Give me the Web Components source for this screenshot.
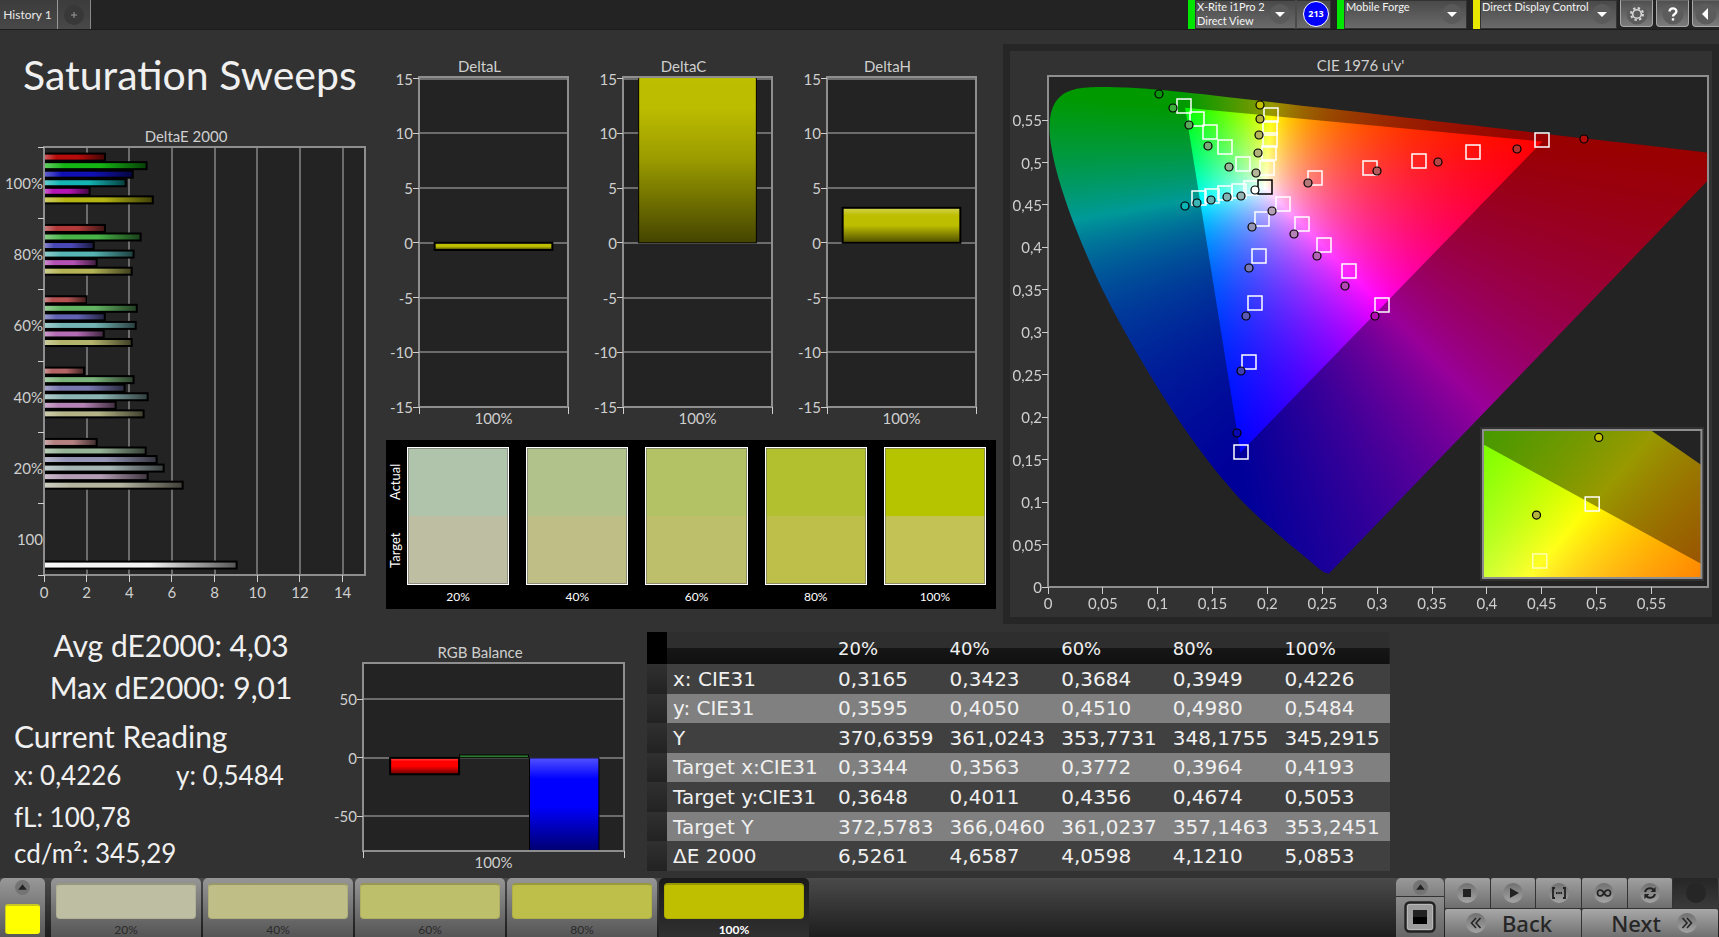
<!DOCTYPE html>
<html lang="en">
<head>
<meta charset="utf-8">
<title>Saturation Sweeps</title>
<style>
html, body { margin: 0; background: #323232; }
body { min-height: 100vh; font-family: Lato, "Open Sans", sans-serif; color: #f0f0f0; }
</style>
</head>
<body>
<calibration-app></calibration-app>
<script>
const define = (name, html, setup) => {
  customElements.define(name, class extends HTMLElement {
    connectedCallback() {
      if (this.shadowRoot) return;
      const root = this.attachShadow({ mode: "open" });
      root.innerHTML = typeof html === "function" ? html(this) : html;
      if (setup) setup(this, root);
    }
  });
};

/* ---------- plots ---------- */
const plotCss = `
  :host { display: block; }
  h2 { margin: 0; font-size: 15px; font-weight: 400; line-height: 20px; text-align: center; color: #cfcfcf; padding-bottom: 1px; }
  .plot { position: relative; height: var(--plot-height); margin-left: var(--gutter); }
  svg.chart { display: block; width: 100%; height: 100%; overflow: visible; }
  .area { overflow: hidden; }
  text { font-size: 15px; fill: #cfcfcf; }
  .bg { fill: #232323; }
  .frame { fill: none; stroke: #8e8e8e; stroke-width: 2; }
  .grid { stroke: #6c6c6c; stroke-width: 2; shape-rendering: crispEdges; }
  .tick { stroke: #cfcfcf; stroke-width: 1; shape-rendering: crispEdges; }
`;
const pct = v => (v * 100).toFixed(3) + "%";
const leftTick = y => `<svg y="${y}" overflow="visible"><line class="tick" x1="-6" x2="0" y1="0" y2="0"/></svg>`;
const bottomTick = x => `<svg x="${x}" y="100%" overflow="visible"><line class="tick" x1="0" x2="0" y1="0" y2="7"/></svg>`;
const leftText = (y, t, gap) => `<text x="${-gap}" y="${y}" dy="6" text-anchor="end">${t}</text>`;
const bottomText = (x, t, dy) => `<text x="${x}" y="100%" dy="${dy}" text-anchor="middle">${t}</text>`;
const shades = `
  <linearGradient id="shadeX"><stop offset="0" stop-color="#fff" stop-opacity=".35"/><stop offset=".2" stop-color="#fff" stop-opacity="0"/><stop offset=".55" stop-color="#000" stop-opacity="0"/><stop offset="1" stop-color="#000" stop-opacity=".65"/></linearGradient>
  <linearGradient id="shadeY" x2="0" y2="1"><stop offset="0" stop-color="#fff" stop-opacity=".32"/><stop offset=".22" stop-color="#fff" stop-opacity="0"/><stop offset=".5" stop-color="#000" stop-opacity="0"/><stop offset="1" stop-color="#000" stop-opacity=".6"/></linearGradient>
  <linearGradient id="deepY" x2="0" y2="1"><stop offset="0" stop-color="#000" stop-opacity="0"/><stop offset=".2" stop-color="#000" stop-opacity=".01"/><stop offset=".5" stop-color="#000" stop-opacity=".18"/><stop offset="1" stop-color="#000" stop-opacity=".64"/></linearGradient>`;
const bar = (x, y, w, h, fill, shade, line = 1) =>
  `<rect x="${x}" y="${y}" width="${w}" height="${h}" fill="${fill}"/>
   <rect x="${x}" y="${y}" width="${w}" height="${h}" fill="url(#${shade})" stroke="#000" stroke-width="${line}"/>`;

const sweeps = [
  ["100%", [2.86, 4.81, 4.16, 3.83, 2.14, 5.1], ["#b80c0c", "#14b414", "#1010b4", "#14b4b4", "#b414b4", "#b4b414"]],
  ["80%", [2.86, 4.53, 2.33, 4.2, 2.47, 4.11], ["#b43a3a", "#48b448", "#4848b4", "#56b4b4", "#b452b4", "#b4b456"]],
  ["60%", [2, 4.35, 2.85, 4.3, 2.8, 4.11], ["#b45050", "#62b462", "#6262b4", "#74b4b4", "#b46cb4", "#b4b46c"]],
  ["40%", [1.88, 4.2, 3.78, 4.86, 3.36, 4.67], ["#b46464", "#7ab47a", "#7878b0", "#8cb4b4", "#b482b4", "#b4b486"]],
  ["20%", [2.47, 4.77, 5.28, 5.61, 4.86, 6.5], ["#b48080", "#96b496", "#9494b4", "#a4b4b4", "#b49cb4", "#b4b4a0"]],
  ["100", [null, null, null, null, null, null, 9.03], ["", "", "", "", "", "", "#f4f4f4"]]
];
define("sweep-chart", () => {
  const max = 15.05, rows = sweeps.length;
  let s = "", bars = "", out = "";
  for (let v = 0; v <= 14; v += 2) {
    if (v) s += `<line class="grid" x1="${pct(v / max)}" x2="${pct(v / max)}" y1="0" y2="100%"/>`;
    out += bottomTick(pct(v / max)) + bottomText(pct(v / max), v, 23);
  }
  sweeps.forEach(([name, vals, colors], r) => {
    out += leftTick(pct(r / rows)) + leftText(pct((r + .5) / rows), name, 1);
    vals.forEach((v, i) => {
      if (v) bars += bar(0, pct((r + (6.6 + i * 8.55) / 71.33) / rows), pct(v / max), 7, colors[i], "shadeX", 2);
    });
  });
  out += leftTick("100%");
  return `<style>${plotCss} :host { --plot-height: 428px; --gutter: 37px; }</style>
  <h2>DeltaE 2000</h2><div class="plot"><svg class="chart" role="img" aria-label="DeltaE 2000 per saturation"><defs>${shades}</defs>
  <rect class="bg" width="100%" height="100%"/>${s}<svg class="area" width="100%" height="100%">${bars}</svg>
  <rect class="frame" width="100%" height="100%"/>${out}</svg></div>`;
});

define("delta-chart", host => {
  const v = +host.getAttribute("value"), top = 15.15, range = 30.15;
  const pos = n => pct((top - n) / range);
  let g = "", out = "";
  for (let n = 15; n >= -15; n -= 5) {
    g += `<line class="grid" x1="0" x2="100%" y1="${pos(n)}" y2="${pos(n)}"/>`;
    out += leftTick(pos(n)) + leftText(pos(n), n, 6);
  }
  const clipped = v > 15;
  const y = v > 0 ? (clipped ? "-1%" : pos(v)) : pos(0);
  const h = clipped ? pct(15.15 / range + .01) : pct(Math.abs(v) / range);
  return `<style>${plotCss} :host { --plot-height: 330px; --gutter: 28px; }</style>
  <h2>${host.getAttribute("label")}</h2><div class="plot"><svg class="chart" role="img" aria-label="${host.getAttribute("label")}"><defs>${shades}</defs>
  <rect class="bg" width="100%" height="100%"/>${g}<svg class="area" width="100%" height="100%">${bar("10.5%", y, "79%", h, "#bebe00", clipped ? "deepY" : "shadeY", clipped ? 1 : 2)}</svg>
  <rect class="frame" width="100%" height="100%"/>${out}${bottomTick("0")}${bottomTick("100%")}${bottomText("50%", "100%", 17)}</svg></div>`;
});

define("rgb-chart", () => {
  const pos = n => pct((81 - n) / 160.5);
  let g = "", out = "";
  for (const n of [50, 0, -50]) {
    g += `<line class="grid" x1="0" x2="100%" y1="${pos(n)}" y2="${pos(n)}"/>`;
    out += leftTick(pos(n)) + leftText(pos(n), n, 6);
  }
  return `<style>${plotCss} :host { --plot-height: 188px; --gutter: 27px; }</style>
  <h2>RGB Balance</h2><div class="plot"><svg class="chart" role="img" aria-label="RGB Balance"><defs>${shades}</defs>
  <rect class="bg" width="100%" height="100%"/>${g}<svg class="area" width="100%" height="100%">
  ${bar("10.4%", pos(0), "26.4%", pct(14 / 160.5), "#f00", "shadeY", 2)}
  ${bar("37%", pos(2.5), "26.4%", pct(2.5 / 160.5), "#2d7d2d", "shadeY")}
  ${bar("63.8%", pos(0), "26.6%", pct(82 / 160.5), "#00f", "shadeY")}</svg>
  <rect class="frame" width="100%" height="100%"/>${out}${bottomTick("0")}${bottomTick("100%")}${bottomText("50%", "100%", 17)}</svg></div>`;
});

/* ---------- chromaticity ---------- */
const locus = [[.1741,.005],[.1733,.0048],[.1714,.0051],[.1689,.0069],[.1644,.0109],[.1566,.0177],[.144,.0297],[.1355,.0399],[.1241,.0578],[.1096,.0868],[.0913,.1327],[.0687,.2007],[.0454,.295],[.0235,.4127],[.0082,.5384],[.0039,.6548],[.0139,.7502],[.0389,.812],[.0743,.8338],[.1142,.8262],[.1547,.8059],[.2296,.7543],[.3016,.6923],[.3731,.6245],[.4441,.5547],[.5125,.4866],[.5752,.4242],[.627,.3725],[.6915,.3083],[.7347,.2653]];
const gamut = [[.64, .33], [.3, .6], [.15, .06]];
const toUv = ([x, y]) => { const d = -2 * x + 12 * y + 3; return [4 * x / d, 9 * y / d]; };
const toXy = ([u, v]) => { const d = 6 * u - 16 * v + 12; return [9 * u / d, 4 * v / d]; };
const same = p => p;
function paint(canvas, w, h, toPixel, fromPixel, project) {
  canvas.width = w; canvas.height = h;
  const c = canvas.getContext("2d"), img = c.createImageData(w, h), d = img.data;
  for (let j = 0, k = 0; j < h; j++) for (let i = 0; i < w; i++, k += 4) {
    const [x, y] = fromPixel(i + .5, j + .5);
    const X = x / y, Z = (1 - x - y) / y;
    const r = Math.max(0, 3.2406 * X - 1.5372 - .4986 * Z);
    const g = Math.max(0, -.9689 * X + 1.8758 + .0415 * Z);
    const b = Math.max(0, .0557 * X - .204 + 1.057 * Z);
    const m = Math.max(r, g, b) || 1;
    d[k] = 255 * r / m; d[k + 1] = 255 * g / m; d[k + 2] = 255 * b / m; d[k + 3] = 255;
  }
  c.putImageData(img, 0, 0);
  const pts = locus.map(p => toPixel(project(p)));
  const outline = new Path2D();
  outline.moveTo(...pts[0]);
  for (let i = 0; i < pts.length - 1; i++) {
    const a = pts[Math.max(0, i - 1)], p = pts[i], q = pts[i + 1], z = pts[Math.min(pts.length - 1, i + 2)];
    outline.bezierCurveTo(p[0] + (q[0] - a[0]) / 6, p[1] + (q[1] - a[1]) / 6, q[0] - (z[0] - p[0]) / 6, q[1] - (z[1] - p[1]) / 6, q[0], q[1]);
  }
  outline.closePath();
  c.globalCompositeOperation = "destination-in";
  c.fill(outline);
  c.globalCompositeOperation = "source-atop";
  const shade = new Path2D();
  shade.rect(0, 0, w, h);
  gamut.map(p => toPixel(project(p))).forEach((p, i) => i ? shade.lineTo(...p) : shade.moveTo(...p));
  shade.closePath();
  c.fillStyle = "rgba(0,0,0,.4)";
  c.fill(shade, "evenodd");
}
/* marker centres on a 660 x 511 plot: [target], [actual], fill of the actual dot */
const W = 660, H = 511;
const markers = [
  [[136,30],[111,18],"#0a960a"],[[149,43],[125,32],"#3cae3c"],[[162,56],[141,49],"#5aa85a"],[[177,71],[160,70],"#78aa78"],[[195,88],[181,91],"#96b496"],
  [[223,39],[212,29],"#c0c000"],[[222,52],[212,43],"#b4b43c"],[[222,64],[211,59],"#b4b45a"],[[221,77],[210,77],"#b0b078"],[[219,92],[208,97],"#b4b496"],
  [[151,122],[137,130],"#0ab4b4"],[[164,120],[149,127],"#3cb4b4"],[[177,117],[163,124],"#64b4b4"],[[191,115],[179,121],"#82b4b4"],[[203,112],[193,120],"#96b4b4"],
  [[267,102],[260,107],"#b47878"],[[322,92],[329,95],"#b45a5a"],[[371,85],[390,86],"#b44646"],[[425,76],[469,73],"#b43232"],[[494,64],[536,63],"#b40a0a"],
  [[235,128],[224,135],"#b4a0b4"],[[254,148],[246,158],"#b482b4"],[[276,169],[269,180],"#b464b4"],[[301,195],[297,210],"#b446b4"],[[334,229],[327,240],"#b40ab4"],
  [[214,143],[204,151],"#9696b4"],[[211,180],[201,192],"#7878b4"],[[207,227],[198,240],"#5a5ab4"],[[201,286],[193,295],"#3c3cb4"],[[193,376],[189,357],"#0a0ab4"]
];
const box = (x, y, color) => `<svg x="${x}" y="${y}" overflow="visible"><rect x="-7" y="-7" width="14" height="14" fill="none" stroke="${color}" stroke-width="1.5"/></svg>`;
const dot = (x, y, fill) => `<circle cx="${x}" cy="${y}" r="4" fill="${fill}" stroke="#000" stroke-width="1.2"/>`;
define("cie-chart", () => {
  let out = "", m = "";
  for (let i = 0; i < 12; i++) {
    const label = String(i * 5 / 100).replace(".", ",");
    const x = pct(i * 54.86 / W), y = pct(1 - i * 42.45 / H);
    out += leftTick(y) + leftText(y, label, 6) + bottomTick(x) + bottomText(x, label, 22);
  }
  markers.forEach(([t]) => m += box(pct(t[0] / W), pct(t[1] / H), "#fff"));
  m += box(pct(217 / W), pct(111 / H), "#000");
  markers.forEach(([, a, f]) => m += dot(pct(a[0] / W), pct(a[1] / H), f));
  m += dot(pct(207 / W), pct(114 / H), "#fff");
  return `<style>${plotCss}
  :host { --plot-height: 511px; --gutter: 35px; background: #323232; border: 7px solid #262626; padding: 4px 4px 30px 3px; }
  canvas { display: block; width: 100%; height: 100%; position: absolute; }
  .plot { background: #232323; }
  .chart { position: relative; }
  .inset { position: absolute; right: 4px; bottom: 6px; width: 34%; height: 154px; box-sizing: border-box; padding: 3px; background: #323232; }
  .inset div { position: relative; height: 100%; background: #232323; }
  </style>
  <h2>CIE 1976 u'v'</h2><div class="plot"><canvas id="main"></canvas>
  <svg class="chart" role="img" aria-label="CIE 1976 u'v' diagram">${m}<rect class="frame" width="100%" height="100%"/>${out}</svg>
  <div class="inset"><div><canvas id="detail"></canvas><svg class="chart" role="img" aria-label="Detail around the current target">
  ${box("50%", "50%", "#fff")}${box("26%", "88.5%", "#ffffb0")}${dot("53%", "5%", "#c0c000")}${dot("24.5%", "57.5%", "#b4b43c")}
  <rect class="frame" width="100%" height="100%"/></svg></div></div></div>`;
}, (host, root) => {
  const sx = 1097, sy = 852;
  paint(root.getElementById("main"), W, H, ([u, v]) => [u * sx, H - v * sy], (i, j) => toXy([i / sx, (H - j) / sy]), toUv);
  const w = 218, h = 148, kx = 2230, ky = 1540;
  paint(root.getElementById("detail"), w, h,
    ([x, y]) => [w / 2 + (x - .4193) * kx, h / 2 - (y - .5053) * ky],
    (i, j) => [.4193 + (i - w / 2) / kx, .5053 - (j - h / 2) / ky], same);
});

/* ---------- swatches ---------- */
define("swatch-panel", () => {
  const data = [["20%", "#b0c4ac", "#bebfa2"], ["40%", "#b1c28a", "#bfbe86"], ["60%", "#b2c264", "#bebf6a"], ["80%", "#b2c02f", "#bebf4b"], ["100%", "#b6c400", "#c3c255"]];
  return `<style>
  :host { display: grid; grid-template-columns: 13px 1fr; column-gap: 5px; background: #000; padding: 7px 10px 2px 3px; color: #fff; }
  .side { display: grid; grid-template-rows: 1fr 1fr; height: 138px; }
  .side span { writing-mode: vertical-rl; transform: rotate(180deg); text-align: center; font-size: 13px; line-height: 13px; }
  .row { display: grid; grid-template-columns: repeat(5, minmax(0, 1fr)); gap: 17px; }
  figure { margin: 0; text-align: center; font-size: 12px; line-height: 20px; }
  i { display: block; height: 134px; border: 1px solid #fff; outline: 1px solid rgba(110,110,110,.6); outline-offset: -2px; padding: 1px; margin-bottom: 2px; }
  </style><div class="side"><span>Actual</span><span>Target</span></div><div class="row">${data.map(([n, a, t]) =>
    `<figure><i style="background:linear-gradient(${a} 50%, ${t} 50%)"></i><figcaption>${n}</figcaption></figure>`).join("")}</div>`;
});

/* ---------- table ---------- */
define("reading-table", () => {
  const rows = [
    ["x: CIE31", "0,3165", "0,3423", "0,3684", "0,3949", "0,4226"],
    ["y: CIE31", "0,3595", "0,4050", "0,4510", "0,4980", "0,5484"],
    ["Y", "370,6359", "361,0243", "353,7731", "348,1755", "345,2915"],
    ["Target x:CIE31", "0,3344", "0,3563", "0,3772", "0,3964", "0,4193"],
    ["Target y:CIE31", "0,3648", "0,4011", "0,4356", "0,4674", "0,5053"],
    ["Target Y", "372,5783", "366,0460", "361,0237", "357,1463", "353,2451"],
    ["ΔE 2000", "6,5261", "4,6587", "4,0598", "4,1210", "5,0853"]
  ];
  return `<style>
  :host { display: block; font-family: "DejaVu Sans", "Open Sans", sans-serif; }
  table { width: 100%; height: 239px; border-collapse: collapse; table-layout: fixed; }
  th, td { padding: 0 0 0 6px; text-align: left; font-size: 20px; font-weight: 400; line-height: 28px; white-space: nowrap; }
  thead tr { height: 32px; background: linear-gradient(#2e2e2e 50%, #161616 50%, #101010); }
  thead th { font-size: 18px; padding-top: 2px; }
  thead td:first-child { background: #000; }
  tbody tr { background: #404040; }
  tbody tr:nth-child(even) { background: #808080; }
  tbody td:first-child { background: linear-gradient(#303030, #222); }
  .edge { width: 20px; } .name { width: 165px; }
  </style><table><colgroup><col class="edge"><col class="name"><col span="5"></colgroup>
  <thead><tr><td></td><td></td>${["20%", "40%", "60%", "80%", "100%"].map(h => `<th scope="col">${h}</th>`).join("")}</tr></thead>
  <tbody>${rows.map(r => `<tr><td></td><th scope="row">${r[0]}</th>${r.slice(1).map(c => `<td>${c}</td>`).join("")}</tr>`).join("")}</tbody></table>`;
});

/* ---------- readings ---------- */
define("reading-summary", `<style>
  :host { display: block; padding: 0 0 0 14px; font-size: 26px; white-space: nowrap; }
  .stats { width: 314px; text-align: center; font-size: 30px; line-height: 42px; }
  h2 { margin: 10px 0 0; font-size: 30px; font-weight: 400; line-height: 36px; }
  p { margin: 0; line-height: 36px; }
  .xy { display: grid; grid-template-columns: 162px 1fr; margin: 3px 0 6px; }
</style><div class="stats">Avg dE2000: 4,03<br>Max dE2000: 9,01</div>
<h2>Current Reading</h2><p class="xy"><span>x: 0,4226</span><span>y: 0,5484</span></p><p>fL: 100,78</p><p>cd/m²: 345,29</p>`);

/* ---------- header ---------- */
define("device-menu", host => `<style>
  :host { display: flex; box-sizing: border-box; height: 29px; background: linear-gradient(#484848, #6c6c6c); border-left: 7px solid ${host.getAttribute("color")}; box-shadow: 0 0 0 1px #333 inset; }
  button { flex: 1; min-width: 0; display: flex; margin: 0; border: 0; padding: 0 5px 0 2px; background: none; color: #f4f4f4; font: 11px/14px Lato, sans-serif; text-align: left; white-space: pre; }
  .label { flex: 1; min-width: 0; }
  svg { flex: none; margin-top: 4px; }
  .count { flex: none; display: flex; align-items: center; padding: 0 2px 1px 6px; border-left: 2px solid #4a4a4a; }
  .count b { box-sizing: border-box; width: 26px; height: 26px; border: 1px solid #fff; border-radius: 50%; background: #0000fa; color: #fff; font: 700 9px/24px "Open Sans", sans-serif; text-align: center; }
</style><button type="button" aria-haspopup="menu"><span class="label"><slot></slot></span><svg width="20" height="20"><circle cx="10" cy="10" r="10" fill="#5a5a5a"/><path d="M5 8h10l-5 5z" fill="#fff"/></svg></button>
${host.hasAttribute("count") ? `<span class="count"><b>${host.getAttribute("count")}</b></span>` : ""}`);

define("app-header", `<style>
  :host { display: flex; height: 29px; background: #232323; border-bottom: 1px solid #1c1c1c; }
  button { margin: 0; border: 0; padding: 0; font: 12px/29px Lato, sans-serif; color: #e8e8e8; background: linear-gradient(#3c3c3c, #484848); }
  .tab { width: 58px; border-right: 1px solid #999; padding-right: 2px; }
  .add { width: 33px; border-right: 1px solid #888; display: grid; place-items: center; }
  .space { flex: 1; }
  device-menu { margin-right: 6px; flex: none; }
  .m1 { width: 143px; } .m2 { width: 130px; } .m3 { width: 144px; margin-right: 3px; }
  .tool { box-sizing: border-box; flex: none; width: 33px; height: 27px; margin-right: 3px; border: 1px solid #aaa; border-top-color: #666; border-radius: 0 0 4px 4px; background: linear-gradient(#505050, #7c7c7c); display: grid; place-items: center; }
  .last { width: 27px; margin-right: 0; border-right: 0; border-bottom-right-radius: 0; }
</style>
<button class="tab" type="button">History 1</button>
<button class="add" type="button" aria-label="Add history"><svg width="20" height="20"><circle cx="10" cy="10" r="10" fill="#383838"/><path d="M7 10h6M10 7v6" stroke="#999"/></svg></button>
<span class="space"></span>
<device-menu class="m1" color="#00e600" count="213">X-Rite i1Pro 2
Direct View</device-menu>
<device-menu class="m2" color="#00e600">Mobile Forge</device-menu>
<device-menu class="m3" color="#e6e600">Direct Display Control</device-menu>
<button class="tool" type="button" aria-label="Settings"><svg width="22" height="22" viewBox="-11 -11 22 22"><circle r="10.5" fill="#5c5c5c"/><g fill="none" stroke="#d8d8d8"><circle r="4.3" stroke-width="1.6"/><circle r="6" stroke-width="2" stroke-dasharray="2.4 2.312"/></g></svg></button>
<button class="tool" type="button" aria-label="Help"><svg width="22" height="22" viewBox="-11 -11 22 22"><circle r="10.5" fill="#5c5c5c"/><path d="M-3.4 -2.4C-3.4 -6.6 3.4 -6.6 3.4 -2.6C3.4 0 0 -.2 0 2.4M0 4.2V6.6" fill="none" stroke="#fff" stroke-width="2.4"/></svg></button>
<button class="tool last" type="button" aria-label="Collapse"><svg width="22" height="22" viewBox="-11 -11 22 22"><circle r="10.5" fill="#5c5c5c"/><path d="M-4 0L2 -6V6z" fill="#fff"/></svg></button>`);

/* ---------- footer ---------- */
const knob = inner => `<svg width="20" height="20" viewBox="-10 -10 20 20" aria-hidden="true"><defs><linearGradient id="k" x2="0" y2="1"><stop stop-color="#707070"/><stop offset="1" stop-color="#a4a4a4"/></linearGradient></defs><circle r="10" fill="url(#k)"/>${inner}</svg>`;
const upButton = `<button class="up" type="button" aria-label="Expand"><svg width="15" height="15" viewBox="-7 -7 14 14"><circle r="7" fill="#747474"/><path d="M-4 2L0 -3L4 2z" fill="#222"/></svg></button>`;
define("patch-button", `<style>
  :host { display: block; width: 150px; flex: none; }
  button { width: 100%; height: 59px; margin: 0; border: 0; padding: 5px 5px 0; border-radius: 5px 5px 0 0; background: linear-gradient(#969696, #555); font: 12px/21px Lato, sans-serif; color: #2a2a2a; display: block; }
  i { display: block; height: 36px; box-sizing: border-box; border-radius: 4px; background: var(--patch); border: 1px solid rgba(0,0,0,.08); border-top: 2px solid rgba(0,0,0,.2); }
  :host([selected]) button { background: linear-gradient(#1a1a1a, #303030); color: #fff; font-weight: 700; }
</style><button type="button"><i></i><slot></slot></button>`);

define("app-footer", `<style>
  :host { display: flex; height: 59px; background: linear-gradient(#4a4a4a, #1e1e1e); }
  button { margin: 0; border: 0; padding: 0; }
  svg { display: block; }
  .current { width: 45px; flex: none; margin-right: 6px; border-radius: 5px 5px 0 0; background: linear-gradient(#989898, #585858); display: flex; flex-direction: column; align-items: center; }
  .up { background: none; height: 18px; display: grid; place-items: center; width: 100%; }
  .color { width: 35px; height: 30px; margin-top: 8px; background: #ff0; border-radius: 3px; border-top: 2px solid #c8c820; border-left: 1px solid #c8c820; box-sizing: border-box; }
  .patches { flex: 1; display: flex; gap: 2px; min-width: 0; }
  .stop { width: 48px; flex: none; background: #333; border-radius: 5px 5px 0 0; overflow: hidden; display: flex; flex-direction: column; gap: 1px; }
  .stop .up { background: linear-gradient(#999, #808080); }
  .stop .big { flex: 1; background: linear-gradient(#8c8c8c, #666); display: grid; place-items: center; }
  .nav { width: 273px; flex: none; margin: 0 1px; display: grid; grid-template-columns: repeat(6, 1fr); grid-template-rows: 30px 28px; gap: 1px; background: #333; }
  .nav button { background: linear-gradient(#a0a0a0, #6e6e6e); display: flex; align-items: center; justify-content: center; border-radius: 2px 2px 0 0; }
  .nav .off { background: linear-gradient(#262626, #3a3a3a); }
  .nav .wide { grid-column: span 3; gap: 16px; padding-right: 8px; font: 500 22px/28px "Noto Sans", "Open Sans", sans-serif; color: #262626; background: linear-gradient(#a8a8a8, #707070); }
  .nav .next { padding: 0 0 0 8px; }
</style>
<div class="current">${upButton}<div class="color"></div></div>
<div class="patches">
<patch-button style="--patch:#bebfa2">20%</patch-button><patch-button style="--patch:#bfbe86">40%</patch-button><patch-button style="--patch:#bebf6a">60%</patch-button><patch-button style="--patch:#bebf4b">80%</patch-button><patch-button selected style="--patch:#bfbf00">100%</patch-button>
</div>
<div class="stop">${upButton}
<button class="big" type="button" aria-label="Stop pattern"><svg width="32" height="32"><rect x="1.5" y="1.5" width="29" height="29" rx="4" fill="#9c9c9c" stroke="#222" stroke-width="2.4"/><rect x="3.5" y="3.5" width="25" height="25" rx="2" fill="none" stroke="#b8b8b8"/><path d="M9 9h14v14H9z" fill="#000"/><path d="M9 9h14v7H9z" fill="#222"/></svg></button></div>
<div class="nav">
<button type="button" aria-label="Stop">${knob('<path d="M-4-4h8v8h-8z" fill="#222"/>')}</button>
<button type="button" aria-label="Play">${knob('<path d="M-3-5L6 0L-3 5z" fill="#222"/>')}</button>
<button type="button" aria-label="Range">${knob('<path d="M-4-5h-2V5h2M4-5h2V5h-2M-3 0h1.6M-.8 0h1.6M1.4 0H3" fill="none" stroke="#222" stroke-width="1.8"/>')}</button>
<button type="button" aria-label="Loop">${knob('<path d="M0 0C-2-4-6.500-4-6.500 0S-2 4 0 0S6.500-4 6.500 0S2 4 0 0z" fill="none" stroke="#222" stroke-width="1.7"/>')}</button>
<button type="button" aria-label="Refresh">${knob('<path d="M-5-1C-4-5 1-6 4-3M5 1C4 5-1 6-4 3" fill="none" stroke="#222" stroke-width="2"/><path d="M5.600-6V-1H.6zM-5.600 6V1H-.6z" fill="#222"/>')}</button>
<button class="off" type="button" aria-label="Record" disabled><svg width="20" height="20"><circle cx="10" cy="10" r="10" fill="#262626"/></svg></button>
<button class="wide" type="button">${knob('<path d="M0-5L-4.500 0L0 5M4.500-5L0 0L4.500 5" fill="none" stroke="#222" stroke-width="1.5"/>')}<span>Back</span></button>
<button class="wide next" type="button"><span>Next</span>${knob('<path d="M0-5L4.500 0L0 5M-4.500-5L0 0L-4.500 5" fill="none" stroke="#222" stroke-width="1.5"/>')}</button>
</div>`);

/* ---------- page ---------- */
define("calibration-app", `<style>
  :host { display: flex; flex-direction: column; min-height: 100vh; }
  main { flex: 1; }
  .top { display: grid; grid-template-columns: 386fr 617fr 716fr; padding-top: 14px; align-items: start; }
  .top > * { min-width: 0; }
  h1 { margin: 5px 0 25px 23px; font-size: 41px; font-weight: 400; line-height: 52px; white-space: nowrap; }
  sweep-chart { margin: 0 21px 0 7px; }
  .deltas { display: grid; grid-template-columns: repeat(3, minmax(0, 1fr)); gap: 27px; padding: 12px 27px 33px 5px; }
  swatch-panel { margin-right: 7px; }
  .bottom { display: grid; grid-template-columns: 336fr 288fr 766fr 329fr; align-items: start; }
  .bottom > * { min-width: 0; }
  rgb-chart { padding-top: 18px; }
  reading-table { margin: 8px 0 0 23px; }
</style>
<app-header></app-header>
<main>
<section class="top">
  <div><h1>Saturation Sweeps</h1><sweep-chart></sweep-chart></div>
  <div><div class="deltas"><delta-chart label="DeltaL" value="-0.65"></delta-chart><delta-chart label="DeltaC" value="16"></delta-chart><delta-chart label="DeltaH" value="3.2"></delta-chart></div><swatch-panel></swatch-panel></div>
  <cie-chart></cie-chart>
</section>
<section class="bottom"><reading-summary></reading-summary><rgb-chart></rgb-chart><reading-table></reading-table></section>
</main>
<app-footer></app-footer>`);
</script>
</body>
</html>
